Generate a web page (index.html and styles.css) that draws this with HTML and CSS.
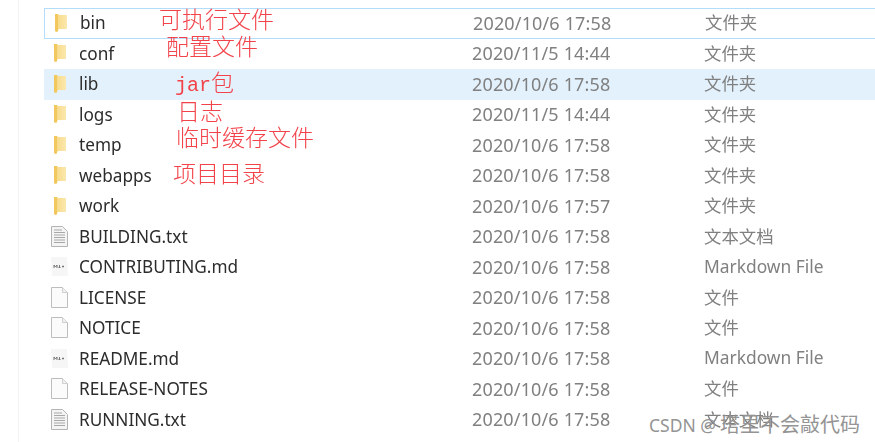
FILE: index.html
```html
<!DOCTYPE html>
<html>

<head>
    <meta http-equiv="Content-Type" content="text/html; charset=utf-8">
    <title>tomcat</title>
    <link rel="stylesheet" href="styles.css">
</head>

<body>
    <svg class="defs" width="0" height="0">
        <defs>
            <linearGradient id="fold" x1="0" y1="0" x2="1" y2="0">
                <stop offset="0" stop-color="#f6d77f"></stop>
                <stop offset="1" stop-color="#fbe8ae"></stop>
            </linearGradient>
            <symbol id="folder" viewBox="0 0 14 20">
                <path d="M1 1h3l1 1h8v14H5l-2 3-2-1z" fill="url(#fold)"></path>
                <path d="M1 1h3v17l-1 1-2-1z" fill="#f1c75e"></path>
            </symbol>
            <symbol id="txt" viewBox="0 0 17 21">
                <path d="M.5.5h11l5 5v15H.5z" fill="#f4f4f4" stroke="#b4b4b4"></path>
                <path d="M3 4h8M3 6.500h11M3 9h11M3 11.500h11M3 14h11M3 16.500h11" stroke="#a8a8a8" fill="none"></path>
            </symbol>
            <symbol id="blank" viewBox="0 0 17 21">
                <path d="M.5.5h11l5 5v15H.5z" fill="#fbfbfb" stroke="#bdbdbd"></path>
                <path d="M11.500.5v5h5" fill="#f0f0f0" stroke="#cfcfcf"></path>
            </symbol>
            <symbol id="md" viewBox="0 0 17 21">
                <path d="M0 1h16l1 19H1z" fill="#f6f6f6"></path>
                <path d="M3 12v-3l1.500 2 1.500-2v3M8.500 9v3M7.500 11l1 1 1-1M12 9.500v2M11 10.500h2" stroke="#777" fill="none"></path>
            </symbol>
        </defs>
    </svg>

    <div class="sheet">
        <div class="list">
            <div class="row focus"><svg class="ico ico-folder"><use href="#folder"></use></svg><span class="name">bin</span><span class="date">2020/10/6 17:58</span><span class="type">文件夹</span></div>
            <div class="row"><svg class="ico ico-folder"><use href="#folder"></use></svg><span class="name">conf</span><span class="date">2020/11/5 14:44</span><span class="type">文件夹</span></div>
            <div class="row hover"><svg class="ico ico-folder"><use href="#folder"></use></svg><span class="name">lib</span><span class="date">2020/10/6 17:58</span><span class="type">文件夹</span></div>
            <div class="row"><svg class="ico ico-folder"><use href="#folder"></use></svg><span class="name">logs</span><span class="date">2020/11/5 14:44</span><span class="type">文件夹</span></div>
            <div class="row"><svg class="ico ico-folder"><use href="#folder"></use></svg><span class="name">temp</span><span class="date">2020/10/6 17:58</span><span class="type">文件夹</span></div>
            <div class="row"><svg class="ico ico-folder"><use href="#folder"></use></svg><span class="name">webapps</span><span class="date">2020/10/6 17:58</span><span class="type">文件夹</span></div>
            <div class="row"><svg class="ico ico-folder"><use href="#folder"></use></svg><span class="name">work</span><span class="date">2020/10/6 17:57</span><span class="type">文件夹</span></div>
            <div class="row"><svg class="ico"><use href="#txt"></use></svg><span class="name">BUILDING.txt</span><span class="date">2020/10/6 17:58</span><span class="type">文本文档</span></div>
            <div class="row"><svg class="ico"><use href="#md"></use></svg><span class="name">CONTRIBUTING.md</span><span class="date">2020/10/6 17:58</span><span class="type">Markdown File</span></div>
            <div class="row"><svg class="ico"><use href="#blank"></use></svg><span class="name">LICENSE</span><span class="date">2020/10/6 17:58</span><span class="type">文件</span></div>
            <div class="row"><svg class="ico"><use href="#blank"></use></svg><span class="name">NOTICE</span><span class="date">2020/10/6 17:58</span><span class="type">文件</span></div>
            <div class="row"><svg class="ico"><use href="#md"></use></svg><span class="name">README.md</span><span class="date">2020/10/6 17:58</span><span class="type">Markdown File</span></div>
            <div class="row"><svg class="ico"><use href="#blank"></use></svg><span class="name">RELEASE-NOTES</span><span class="date">2020/10/6 17:58</span><span class="type">文件</span></div>
            <div class="row"><svg class="ico"><use href="#txt"></use></svg><span class="name">RUNNING.txt</span><span class="date">2020/10/6 17:58</span><span class="type">文本文档</span></div>
        </div>

        <!-- 红字标注 -->
        <span class="note n1">可执行文件</span>
        <span class="note n2">配置文件</span>
        <span class="note n3"><span class="jar">jar</span>包</span>
        <span class="note n4">日志</span>
        <span class="note n5">临时缓存文件</span>
        <span class="note n6">项目目录</span>
    </div>

    <div class="mark"><span class="mark-en">CSDN @</span>塔里不会敲代码</div>
</body>

</html>
```

FILE: styles.css
```css
html,
body {
    margin: 0;
    height: 100%;
    background: #fff;
    overflow: hidden;
}

body {
    position: relative;
    font-family: "Noto Sans", "Noto Sans CJK SC", sans-serif;
}

.defs {
    position: absolute;
}

.sheet {
    position: absolute;
    inset: 0;
    filter: blur(0.45px);
}

.sheet::before {
    content: "";
    position: absolute;
    left: 18px;
    top: 0;
    bottom: 0;
    width: 1px;
    background: #f2f2f2;
}

.list {
    padding: 8px 0 0 44px;
}

.row {
    display: grid;
    grid-template-columns: 35px 393px 232px 1fr;
    align-items: center;
    height: 30.5px;
    padding-bottom: 1px;
    box-sizing: border-box;
    font-size: 17.2px;
    white-space: nowrap;
}

.focus {
    border: 1px solid #b4dcfb;
    border-right: 0;
}

.hover {
    background: #e3f1fc;
}

.ico {
    width: 17px;
    height: 21px;
    margin-left: 7px;
}

.ico-folder {
    width: 14px;
    height: 20px;
    margin-left: 9px;
}

.name {
    color: #2c2c2c;
}

.date {
    color: #808080;
    font-size: 18px;
    letter-spacing: 0.15px;
}

.type {
    color: #808080;
    font-size: 17.4px;
    margin-bottom: 2px;
}

.note {
    position: absolute;
    color: #f2434a;
    font-family: "Liberation Serif", "Noto Sans CJK SC", serif;
    font-size: 23px;
    font-weight: 300;
    line-height: 28px;
    white-space: nowrap;
}

.jar {
    font-family: "Liberation Mono", monospace;
    font-size: 20px;
}

.n1 {
    left: 159px;
    top: 7px;
}

.n2 {
    left: 166px;
    top: 34px;
}

.n3 {
    left: 175px;
    top: 70px;
}

.n4 {
    left: 177px;
    top: 99px;
}

.n5 {
    left: 176px;
    top: 125px;
}

.n6 {
    left: 173px;
    top: 161px;
}

.mark {
    position: absolute;
    left: 649px;
    top: 412px;
    color: #949494;
    font-size: 20px;
    line-height: 26px;
    white-space: nowrap;
}

.mark-en {
    font-size: 17.5px;
    margin-right: 4px;
}
```
